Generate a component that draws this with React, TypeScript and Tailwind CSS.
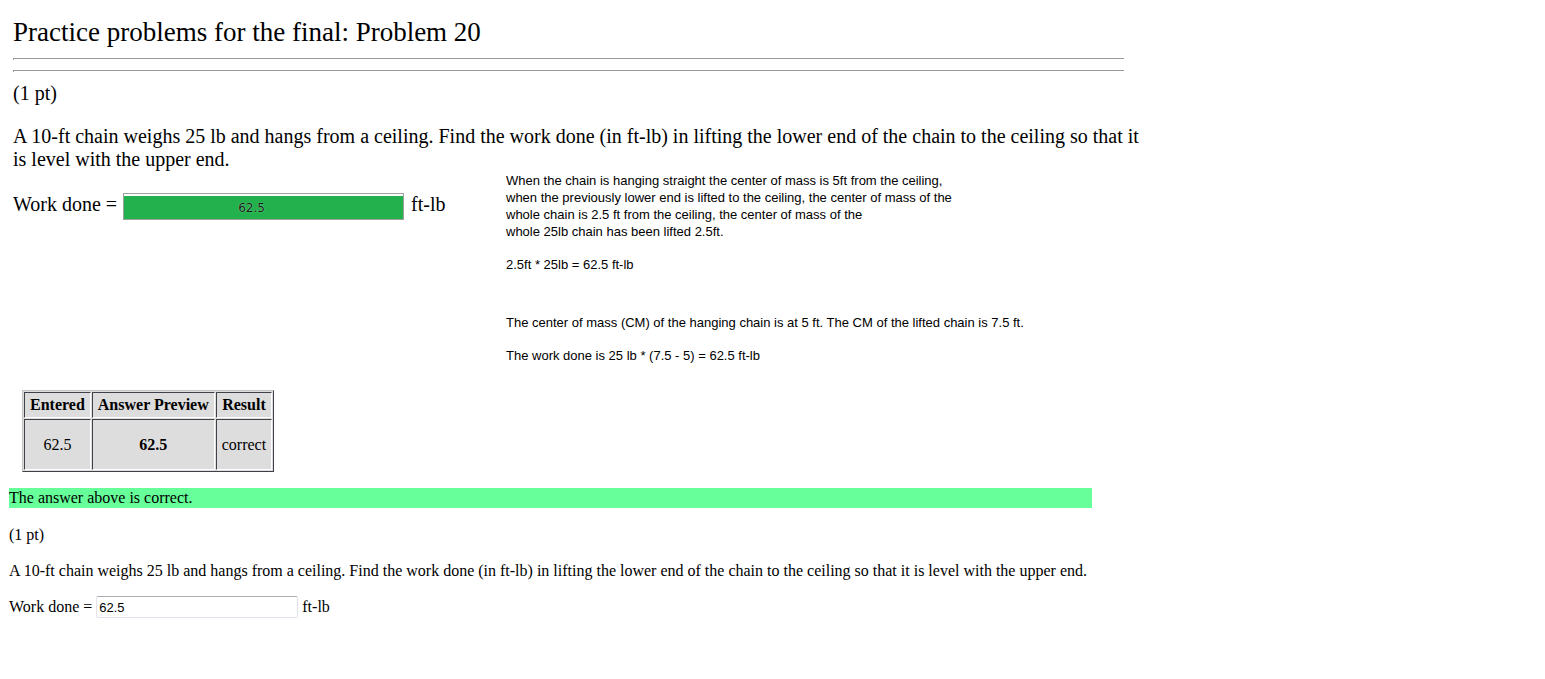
import { useState } from "react";

const QUESTION =
  "A 10-ft chain weighs 25 lb and hangs from a ceiling. Find the work done (in ft-lb) in lifting the lower end of the chain to the ceiling so that it is level with the upper end.";

const HEAD_CELL =
  "h-[26px] border border-t-[#404048] border-l-[#404048] border-r-white border-b-white px-[5px] font-bold";
const BODY_CELL =
  "h-[51px] border border-t-[#404048] border-l-[#404048] border-r-white border-b-white px-[5px]";

function Rule() {
  return <hr className="h-[2px] border-0 border-t border-l border-[#999999]" />;
}

function Notes() {
  return (
    <div className="pt-px font-['Liberation_Sans',Arial,sans-serif] text-[13px] leading-[17px]">
      <p>
        When the chain is hanging straight the center of mass is 5ft from the ceiling,
        <br />
        when the previously lower end is lifted to the ceiling, the center of mass of the
        <br />
        whole chain is 2.5 ft from the ceiling, the center of mass of the
        <br />
        whole 25lb chain has been lifted 2.5ft.
      </p>
      <p className="mt-4">2.5ft * 25lb = 62.5 ft-lb</p>
      <p className="mt-[41px]">
        The center of mass (CM) of the hanging chain is at 5 ft. The CM of the lifted chain is 7.5 ft.
      </p>
      <p className="mt-4">The work done is 25 lb * (7.5 - 5) = 62.5 ft-lb</p>
    </div>
  );
}

export default function App() {
  const [marked, setMarked] = useState("62.5");
  const [answer, setAnswer] = useState("62.5");

  return (
    <main className="bg-white font-['Liberation_Serif','Times_New_Roman',serif] text-black">
      <section className="max-w-[1124px] pt-4 pl-[13px] text-[20px] leading-[23px]">
        <h1 className="text-[27px] leading-8">Practice problems for the final: Problem 20</h1>
        <div className="mt-[10px] flex flex-col gap-[10px]">
          <Rule />
          <Rule />
        </div>
        <p className="mt-[10px]">(1 pt)</p>
        <p className="mt-5 -mr-5">{QUESTION}</p>
        <div className="grid grid-cols-[493px_1fr]">
          <div className="mt-[22px] flex items-start">
            <label htmlFor="marked-answer">Work done =</label>
            <input
              id="marked-answer"
              value={marked}
              onChange={(e) => setMarked(e.target.value)}
              className="ml-[6px] h-[27px] w-[281px] border border-[#a0a0a0] bg-[#22b14c] pt-[3px] pr-6 text-center font-['DejaVu_Sans',sans-serif] text-[12px] text-[#101810] shadow-[inset_0_2px_0_#ffffff] outline-none [text-shadow:0_0_1px_#c8f0d0]"
            />
            <span className="ml-[7px]">ft-lb</span>
          </div>
          <Notes />
        </div>
      </section>

      <section className="max-w-[1092px] pt-[26px] pl-[9px] text-[16px] leading-5">
        <table className="ml-[13px] border-separate border-spacing-[1px] border border-t-[#c4c4c8] border-l-[#c4c4c8] border-r-[#404048] border-b-[#404048] bg-[#dddddd] text-center">
          <thead>
            <tr>
              <th className={HEAD_CELL}>Entered</th>
              <th className={HEAD_CELL}>Answer Preview</th>
              <th className={HEAD_CELL}>Result</th>
            </tr>
          </thead>
          <tbody>
            <tr>
              <td className={BODY_CELL}>62.5</td>
              <td className={BODY_CELL}>
                <b>62.5</b>
              </td>
              <td className={BODY_CELL}>correct</td>
            </tr>
          </tbody>
        </table>
        <p className="mt-4 bg-[#66ff99]">The answer above is correct.</p>
        <p className="mt-[17px]">(1 pt)</p>
        <p className="mt-4">{QUESTION}</p>
        <div className="mt-[15px] flex items-center">
          <label htmlFor="answer">Work done =</label>
          <input
            id="answer"
            value={answer}
            onChange={(e) => setAnswer(e.target.value)}
            className="ml-1 h-[22px] w-[202px] rounded-[2px] border border-[#e2e3ea] border-t-[#abadb3] bg-white px-[2px] font-['Liberation_Sans',Arial,sans-serif] text-[13px] outline-none"
          />
          <span className="ml-1">ft-lb</span>
        </div>
      </section>
    </main>
  );
}
